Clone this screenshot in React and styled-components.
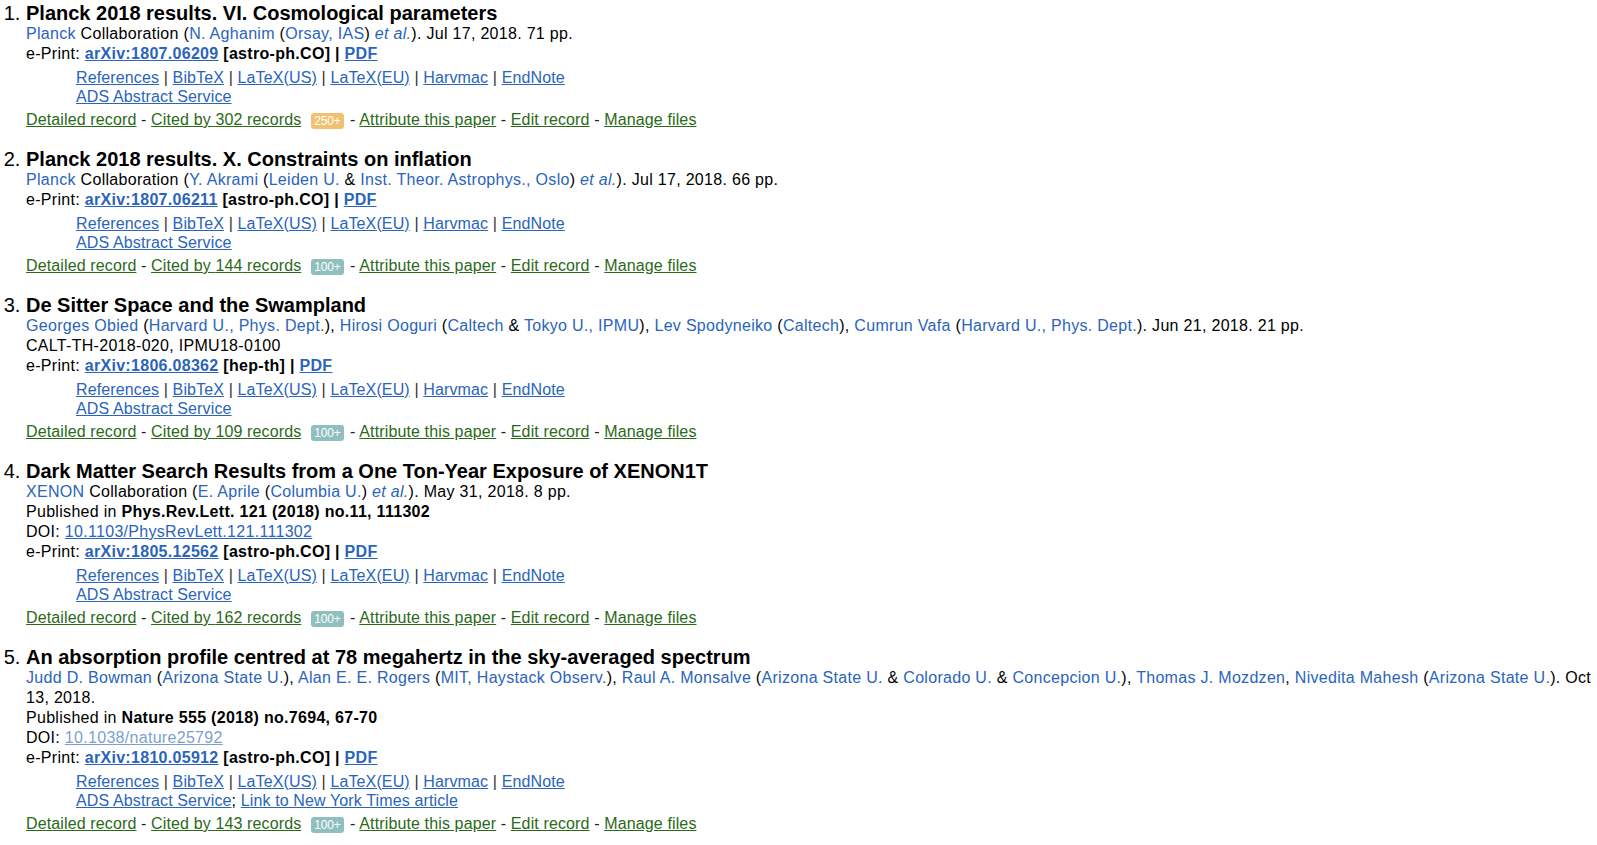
import React from 'react';
import styled, { createGlobalStyle } from 'styled-components';

const GlobalStyle = createGlobalStyle`
  html, body {
    margin: 0;
    padding: 0;
    background: #ffffff;
  }
  body {
    font-family: "Liberation Sans", Arial, sans-serif;
    color: #000000;
  }
`;

const List = styled.ol`
  margin: 0;
  padding: 2px 0 0 26px;
  font-size: 20px;
  line-height: 22px;
`;

const Item = styled.li`
  margin-bottom: 18px;
`;

const Title = styled.div`
  font-weight: bold;
  font-size: 20px;
  line-height: 22px;
`;

const Line = styled.div`
  font-size: 16px;
  line-height: 20px;
  letter-spacing: 0.3px;
`;

const Bold = styled.b`
  font-weight: bold;
`;

const Person = styled.span`
  color: #2a64bb;
`;

const EtAl = styled.i`
  color: #2a64bb;
`;

const Link = styled.a`
  color: ${(p) => (p.$visited ? '#7d9fcf' : '#2a64bb')};
  text-decoration: underline;
  font-weight: ${(p) => (p.$bold ? 'bold' : 'normal')};
  cursor: pointer;
`;

const Formats = styled.div`
  margin: 4px 0 0 50px;
  font-size: 16px;
  line-height: 19px;
  letter-spacing: 0.13px;
`;

const Sep = styled.span`
  color: #333333;
`;

const Footer = styled.div`
  margin-top: 4px;
  font-size: 16px;
  line-height: 20px;
  letter-spacing: 0.13px;
  color: #222222;
`;

const GreenLink = styled.a`
  color: #2a6a18;
  text-decoration: underline;
  cursor: pointer;
`;

const Badge = styled.span`
  display: inline-block;
  margin: 0 2px 0 10px;
  padding: 0 3px;
  border-radius: 3px;
  background: ${(p) => (p.$hot ? '#f0c270' : '#8fc0bf')};
  color: #ffffff;
  font-size: 12px;
  line-height: 16px;
  letter-spacing: -0.2px;
  vertical-align: baseline;
`;

const Amp = () => <span> &amp; </span>;

const papers = [
  {
    title: 'Planck 2018 results. VI. Cosmological parameters',
    authors: (
      <>
        <Person>Planck</Person> Collaboration (<Person>N. Aghanim</Person> (<Person>Orsay, IAS</Person>) <EtAl>et al.</EtAl>). Jul 17, 2018. 71 pp.
      </>
    ),
    eprint: 'arXiv:1807.06209',
    cat: 'astro-ph.CO',
    cited: 302,
    badge: '250+',
    hot: true,
  },
  {
    title: 'Planck 2018 results. X. Constraints on inflation',
    authors: (
      <>
        <Person>Planck</Person> Collaboration (<Person>Y. Akrami</Person> (<Person>Leiden U.</Person><Amp /><Person>Inst. Theor. Astrophys., Oslo</Person>) <EtAl>et al.</EtAl>). Jul 17, 2018. 66 pp.
      </>
    ),
    eprint: 'arXiv:1807.06211',
    cat: 'astro-ph.CO',
    cited: 144,
    badge: '100+',
  },
  {
    title: 'De Sitter Space and the Swampland',
    authors: (
      <>
        <Person>Georges Obied</Person> (<Person>Harvard U., Phys. Dept.</Person>), <Person>Hirosi Ooguri</Person> (<Person>Caltech</Person><Amp /><Person>Tokyo U., IPMU</Person>), <Person>Lev Spodyneiko</Person> (<Person>Caltech</Person>), <Person>Cumrun Vafa</Person> (<Person>Harvard U., Phys. Dept.</Person>). Jun 21, 2018. 21 pp.
      </>
    ),
    report: 'CALT-TH-2018-020, IPMU18-0100',
    eprint: 'arXiv:1806.08362',
    cat: 'hep-th',
    cited: 109,
    badge: '100+',
  },
  {
    title: 'Dark Matter Search Results from a One Ton-Year Exposure of XENON1T',
    authors: (
      <>
        <Person>XENON</Person> Collaboration (<Person>E. Aprile</Person> (<Person>Columbia U.</Person>) <EtAl>et al.</EtAl>). May 31, 2018. 8 pp.
      </>
    ),
    journal: 'Phys.Rev.Lett. 121 (2018) no.11, 111302',
    doi: '10.1103/PhysRevLett.121.111302',
    eprint: 'arXiv:1805.12562',
    cat: 'astro-ph.CO',
    cited: 162,
    badge: '100+',
  },
  {
    title: 'An absorption profile centred at 78 megahertz in the sky-averaged spectrum',
    authors: (
      <>
        <Person>Judd D. Bowman</Person> (<Person>Arizona State U.</Person>), <Person>Alan E. E. Rogers</Person> (<Person>MIT, Haystack Observ.</Person>), <Person>Raul A. Monsalve</Person> (<Person>Arizona State U.</Person><Amp /><Person>Colorado U.</Person><Amp /><Person>Concepcion U.</Person>), <Person>Thomas J. Mozdzen</Person>, <Person>Nivedita Mahesh</Person> (<Person>Arizona State U.</Person>). Oct 13, 2018.
      </>
    ),
    journal: 'Nature 555 (2018) no.7694, 67-70',
    doi: '10.1038/nature25792',
    doiVisited: true,
    eprint: 'arXiv:1810.05912',
    cat: 'astro-ph.CO',
    cited: 143,
    badge: '100+',
    nyt: true,
  },
];

const Paper = ({ p }) => (
  <Item>
    <Title>{p.title}</Title>
    <Line>{p.authors}</Line>
    {p.report && <Line>{p.report}</Line>}
    {p.journal && (
      <Line>
        Published in <Bold>{p.journal}</Bold>
      </Line>
    )}
    {p.doi && (
      <Line>
        DOI: <Link $visited={p.doiVisited}>{p.doi}</Link>
      </Line>
    )}
    <Line>
      e-Print: <Link $bold>{p.eprint}</Link> <Bold>[{p.cat}] |</Bold> <Link $bold>PDF</Link>
    </Line>
    <Formats>
      <div>
        <Link>References</Link> <Sep>|</Sep> <Link>BibTeX</Link> <Sep>|</Sep> <Link>LaTeX(US)</Link> <Sep>|</Sep>{' '}
        <Link>LaTeX(EU)</Link> <Sep>|</Sep> <Link>Harvmac</Link> <Sep>|</Sep> <Link>EndNote</Link>
      </div>
      <div>
        <Link>ADS Abstract Service</Link>
        {p.nyt && (
          <>
            ; <Link>Link to New York Times article</Link>
          </>
        )}
      </div>
    </Formats>
    <Footer>
      <GreenLink>Detailed record</GreenLink> - <GreenLink>Cited by {p.cited} records</GreenLink>
      <Badge $hot={p.hot}>{p.badge}</Badge> - <GreenLink>Attribute this paper</GreenLink> - <GreenLink>Edit record</GreenLink> -{' '}
      <GreenLink>Manage files</GreenLink>
    </Footer>
  </Item>
);

const App = () => (
  <>
    <GlobalStyle />
    <List>
      {papers.map((p) => (
        <Paper key={p.eprint} p={p} />
      ))}
    </List>
  </>
);

export default App;
